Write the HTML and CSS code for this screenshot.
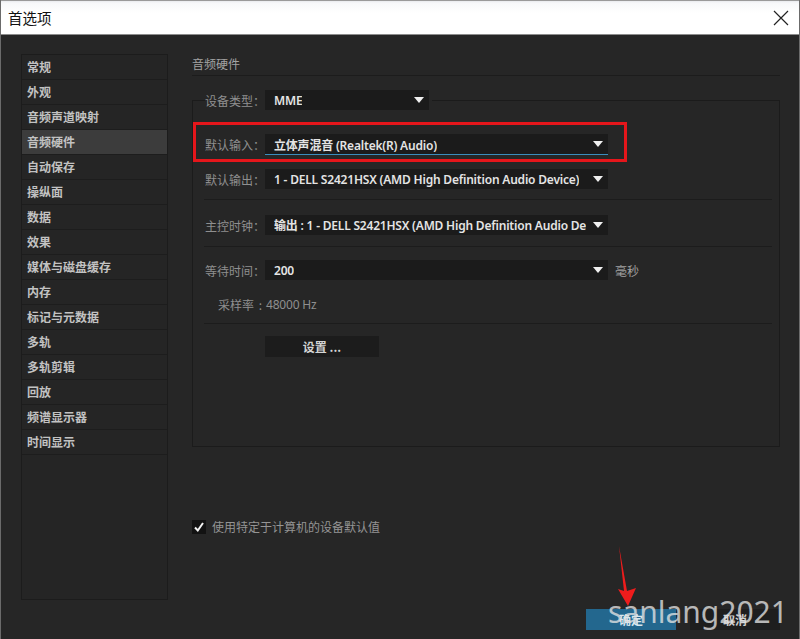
FILE: index.html
```html
<!DOCTYPE html>
<html lang="zh-CN">
<head>
  <meta charset="UTF-8">
  <title>首选项</title>
  <link rel="stylesheet" href="styles.css">
</head>
<body>
  <div class="window">
    <header class="titlebar">
      <span class="title">首选项</span>
      <svg class="close" width="16" height="16" viewBox="0 0 16 16">
        <path d="M1 1 L15 15 M15 1 L1 15" stroke="#222" stroke-width="1.2" fill="none"/>
      </svg>
    </header>

    <div class="dialog">
      <div class="panes">
        <ul class="nav">
          <li>常规</li>
          <li>外观</li>
          <li>音频声道映射</li>
          <li class="active">音频硬件</li>
          <li>自动保存</li>
          <li>操纵面</li>
          <li>数据</li>
          <li>效果</li>
          <li>媒体与磁盘缓存</li>
          <li>内存</li>
          <li>标记与元数据</li>
          <li>多轨</li>
          <li>多轨剪辑</li>
          <li>回放</li>
          <li>频谱显示器</li>
          <li>时间显示</li>
        </ul>

        <section class="page">
          <h3 class="page-title">音频硬件</h3>

          <fieldset class="group">
            <legend class="row">
              <span class="label">设备类型：</span>
              <div class="select short"><span class="value">MME</span><i class="caret"></i></div>
            </legend>

            <div class="callout">
              <div class="row">
                <span class="label">默认输入：</span>
                <div class="select focused"><span class="value">立体声混音 (Realtek(R) Audio)</span><i class="caret"></i></div>
              </div>
            </div>

            <div class="row out-row">
              <span class="label">默认输出：</span>
              <div class="select"><span class="value">1 - DELL S2421HSX (AMD High Definition Audio Device)</span><i class="caret"></i></div>
            </div>

            <hr class="sep sep-1">

            <div class="row clock-row">
              <span class="label">主控时钟：</span>
              <div class="select"><span class="value">输出 : 1 - DELL S2421HSX (AMD High Definition Audio De</span><i class="caret"></i></div>
            </div>

            <hr class="sep sep-2">

            <div class="row wait-row">
              <span class="label">等待时间：</span>
              <div class="select"><span class="value">200</span><i class="caret"></i></div>
              <span class="unit">毫秒</span>
            </div>

            <div class="row rate-row">
              <span class="label">采样率 :</span>
              <span class="rate">48000 Hz</span>
            </div>

            <hr class="sep sep-3">

            <div class="row btn-row">
              <button class="plain-btn">设置 ...</button>
            </div>
          </fieldset>

          <label class="check">
            <span class="box">
              <svg width="12" height="12" viewBox="0 0 12 12"><path d="M2 6.5 L4.8 9.5 L10 2" stroke="#f2f2f2" stroke-width="2" fill="none"/></svg>
            </span>
            使用特定于计算机的设备默认值
          </label>
        </section>
      </div>

      <footer class="actions">
        <button class="btn primary">确定</button>
        <button class="btn">取消</button>
      </footer>
    </div>

    <!-- screenshot annotations -->
    <svg class="pointer" width="800" height="639" viewBox="0 0 800 639">
      <polygon points="618,546 626,591 635,588 627,606 617,589 623,591" fill="#ee1c1c"/>
    </svg>
    <div class="watermark">sanlang2021</div>
  </div>
</body>
</html>
```

FILE: styles.css
```css
body {
  margin: 0;
  padding: 0;
  background: #262626;
  font-family: "Noto Sans", "Noto Sans CJK SC", sans-serif;
  font-size: 12px;
}

.window {
  position: relative;
  width: 800px;
  height: 639px;
  overflow: hidden;
  background: #262626;
  border-left: 1px solid #6b6b6b;
  border-right: 1px solid #6b6b6b;
  box-sizing: border-box;
}

/* title bar */
.titlebar {
  height: 35px;
  box-sizing: border-box;
  display: flex;
  align-items: center;
  justify-content: space-between;
  padding: 0 10px 0 7px;
  background: linear-gradient(#e9ebee 0, #f7f8fa 2px, #ffffff 12px);
  border-top: 1px solid #9a9a9a;
  border-bottom: 1px solid #8c8c8c;
}

.title {
  font-family: "Noto Sans CJK SC", sans-serif;
  font-size: 14.5px;
  color: #111;
}

.close {
  display: block;
}

/* dialog body */
.dialog {
  padding: 19px 19px 0 20px;
}

.panes {
  display: flex;
  gap: 24px;
  height: 546px;
}

.nav {
  list-style: none;
  margin: 0;
  padding: 0;
  width: 147px;
  height: 546px;
  box-sizing: border-box;
  border: 1px solid #1c1c1c;
  background: #252525;
}

.nav li {
  height: 25px;
  box-sizing: border-box;
  padding-left: 5px;
  line-height: 23px;
  border-bottom: 1px solid #1d1d1d;
  font-family: "Noto Sans CJK SC", sans-serif;
  font-weight: bold;
  color: #c2c2c2;
}

.nav li.active {
  background: #3c3c3c;
}

.page {
  flex: 1;
  display: flex;
  flex-direction: column;
}

.page-title {
  margin: 0;
  height: 22px;
  box-sizing: border-box;
  padding-top: 1px;
  font-size: 12px;
  font-weight: normal;
  font-family: "Noto Sans CJK SC", sans-serif;
  color: #a3a3a3;
  border-bottom: 1px solid #1c1c1c;
}

/* group box */
.group {
  margin: 14px 0 0 0;
  padding: 0 11px 89px 12px;
  border: 1px solid #1b1b1b;
  min-width: 0;
}

.group legend {
  padding: 0 3px 0 0;
}

.row {
  display: flex;
  align-items: center;
  height: 20px;
}

.label {
  width: 60px;
  flex: 0 0 60px;
  text-align: right;
  font-family: "Noto Sans CJK SC", sans-serif;
  color: #8f8f8f;
  white-space: nowrap;
}

.select {
  position: relative;
  width: 343px;
  height: 20px;
  box-sizing: border-box;
  padding: 0 18px 0 9px;
  background: #1b1b1b;
  display: flex;
  align-items: center;
  color: #e4e4e4;
  font-weight: 600;
  font-family: "Noto Sans", "Noto Sans CJK SC", sans-serif;
  letter-spacing: -0.2px;
}

.select.short {
  width: 164px;
}

.select.focused {
  height: 21px;
  box-shadow: inset 0 -1px 0 #3a8dbd;
}

.value {
  white-space: nowrap;
  overflow: hidden;
}

.caret {
  position: absolute;
  right: 5px;
  top: 7px;
  width: 0;
  height: 0;
  border-left: 5px solid transparent;
  border-right: 5px solid transparent;
  border-top: 6px solid #f0f0f0;
}

/* red annotation box round the input row */
.callout {
  margin: 12px 0 0 -12px;
  width: 434px;
  box-sizing: border-box;
  border: 3px solid #e5161b;
  padding: 9px 0 4px 9px;
}

.callout .row {
  height: 21px;
}

.out-row {
  margin-top: 7px;
}

.sep {
  margin: 0 -4px 0 -1px;
  border: 0;
  border-top: 1px solid #1c1c1c;
  height: 0;
}

.sep-1 { margin-top: 10px; }
.clock-row { margin-top: 15px; }
.sep-2 { margin-top: 11px; }
.wait-row { margin-top: 13px; }
.rate-row { margin-top: 14px; }
.sep-3 { margin-top: 9px; }
.btn-row { margin-top: 12px; height: 21px; }

.rate-row .label {
  padding-right: 3px;
  box-sizing: border-box;
  word-spacing: 2px;
}

.unit {
  margin-left: 7px;
  font-family: "Noto Sans CJK SC", sans-serif;
  color: #a0a0a0;
}

.rate {
  margin-left: 1px;
  color: #8f8f8f;
  letter-spacing: -0.2px;
}

.plain-btn {
  margin-left: 60px;
  width: 114px;
  height: 21px;
  border: none;
  background: #1c1c1c;
  color: #d4d4d4;
  font-family: "Noto Sans CJK SC", sans-serif;
  font-size: 12px;
  font-weight: bold;
  padding: 0;
}

/* checkbox */
.check {
  margin-top: 71px;
  display: flex;
  align-items: center;
  gap: 6px;
  font-family: "Noto Sans CJK SC", sans-serif;
  color: #949494;
}

.box {
  width: 14px;
  height: 14px;
  background: #121212;
  display: flex;
  align-items: center;
  justify-content: center;
}

/* footer buttons */
.actions {
  display: flex;
  justify-content: flex-end;
  gap: 14px;
  margin-top: 9px;
}

.btn {
  width: 90px;
  height: 21px;
  border: none;
  padding: 0;
  background: #1e1e1e;
  color: #cfcfcf;
  font-family: "Noto Sans CJK SC", sans-serif;
  font-size: 12px;
  font-weight: bold;
}

.btn.primary {
  background: #23678e;
  color: #d8e6ee;
}

/* annotations laid over the screenshot */
.pointer {
  position: absolute;
  left: 0;
  top: 0;
  pointer-events: none;
}

.watermark {
  position: absolute;
  left: 607px;
  top: 592px;
  font-family: "Noto Sans", sans-serif;
  font-size: 30px;
  line-height: 40px;
  color: rgba(226, 226, 226, 0.78);
}
```
